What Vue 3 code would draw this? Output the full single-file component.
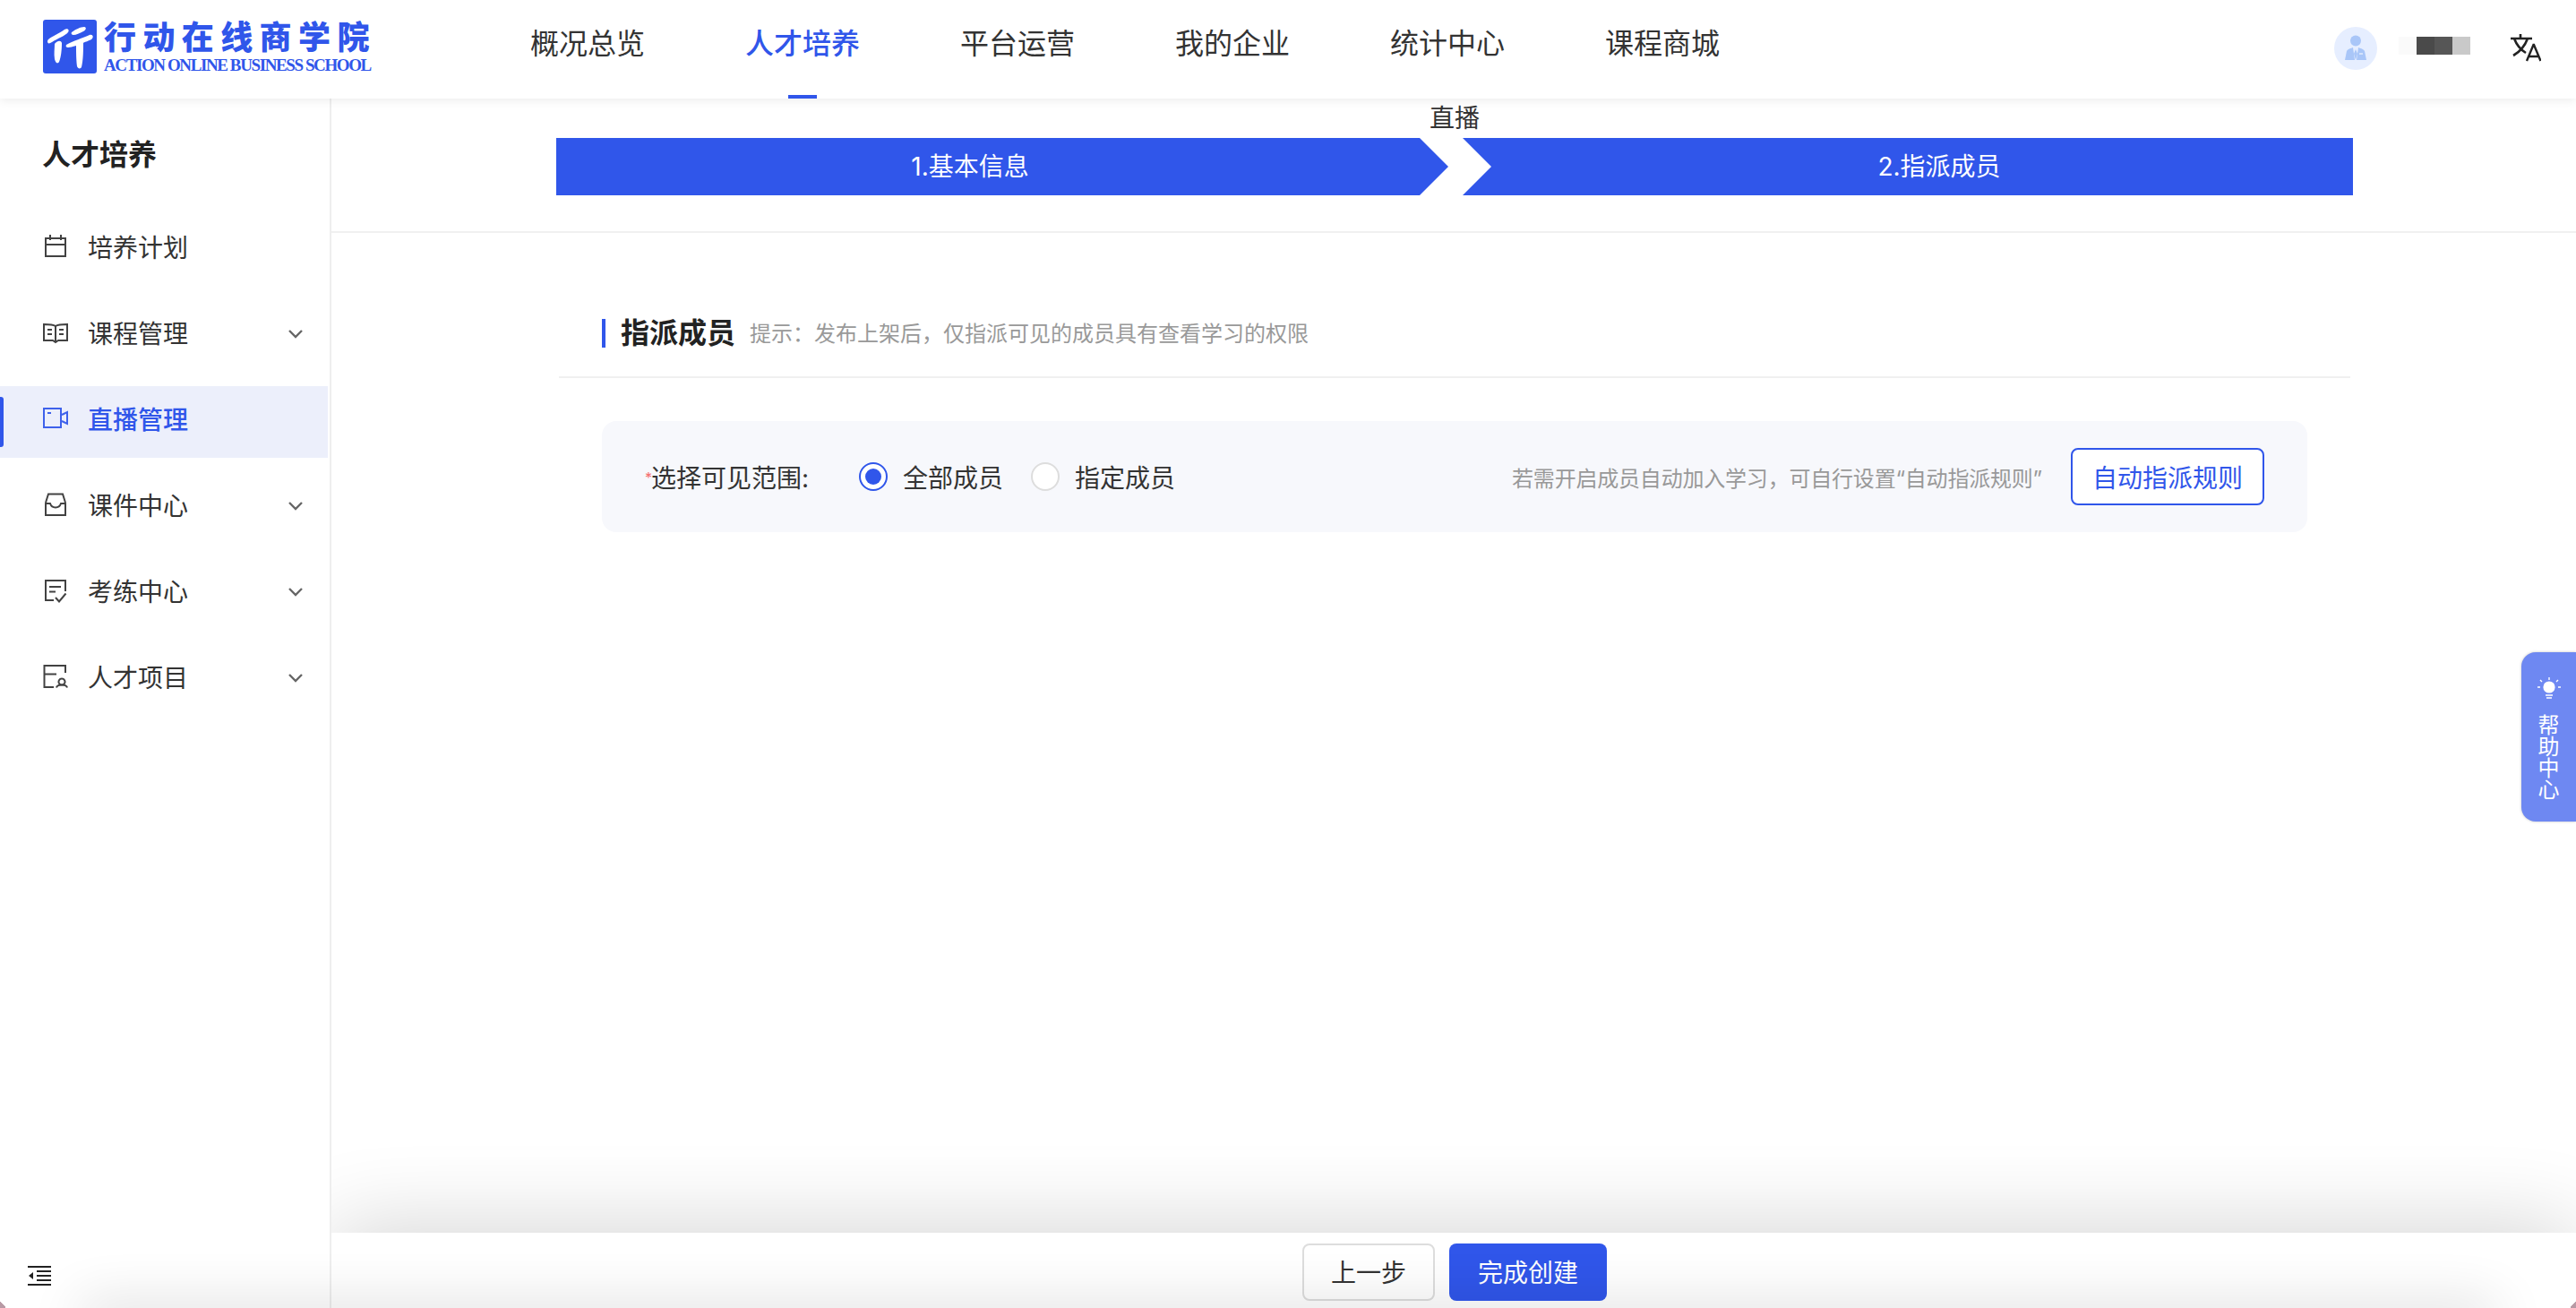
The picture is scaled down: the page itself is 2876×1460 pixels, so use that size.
<template>
  <div class="page">
    <header class="topbar">
      <div class="brand">
        <svg class="brand__mark" viewBox="0 0 60 60">
          <rect width="60" height="60" rx="3" fill="#3056ea" />
          <path d="M5 24C5 20 18 16 24 11C27 9 30 11 28 14C25 18 16 21 10 25C7 27 5 27 5 24Z" fill="#fff" />
          <path d="M13 27C15 24 20 22 21 26C21 34 20 42 18 47C16 50 14 48 13 44C12 38 13 32 13 27Z" fill="#fff" />
          <path d="M32 14C36 11 42 8 46 8C49 8 48 12 45 13C41 15 37 17 34 17C32 17 31 15 32 14Z" fill="#fff" />
          <path d="M26 28C33 24 45 20 52 17C56 16 57 20 54 22C50 24 46 25 45 26C45 34 45 45 43 53C42 55 39 55 38 52C37 44 37 34 37 29C33 30 30 31 28 31C26 31 25 30 26 28Z" fill="#fff" />
        </svg>
        <div class="brand__words">
          <div class="brand__cn">行动在线商学院</div>
          <div class="brand__en">ACTION ONLINE BUSINESS SCHOOL</div>
        </div>
      </div>
      <nav class="nav">
        <a v-for="item in navItems" :key="item" class="nav__item" :class="{ 'is-active': item === '人才培养' }">{{ item }}</a>
      </nav>
      <div class="user">
        <svg class="user__avatar" viewBox="0 0 48 48">
          <circle cx="24" cy="24" r="24" fill="#e6eeff" />
          <circle cx="24" cy="15.5" r="6" fill="#a9c6f8" />
          <path d="M12 37L14 27C16 24 19 24 21 23L23 37ZM25 37L27 23C29 24 32 24 34 27L36 37Z" fill="#a9c6f8" />
          <path d="M24 25L26 30L24 37L22 30Z" fill="#a9c6f8" />
          <path d="M28 30H32" stroke="#fff" stroke-width="1" />
        </svg>
        <div class="user__name">
          <i class="c1"></i><i class="c2"></i><i class="c3"></i><i class="c4"></i>
        </div>
        <svg class="user__lang" viewBox="0 0 34 32" fill="none" stroke="#222" stroke-width="2.6">
          <path d="M0 5H24M11 0V5M4 5C7 13 12 18 17 21M19 5C16 13 10 20 3 24" />
          <path d="M18 30L25.5 12H26L33.5 30M21 25H31" stroke-width="2.4" />
        </svg>
      </div>
    </header>

    <div class="body">
      <aside class="side">
        <h2 class="side__title">人才培养</h2>
        <ul class="menu">
          <li v-for="item in menuItems" :key="item.name" class="menu__item" :class="{ 'is-active': item.active }">
            <svg class="menu__icon" viewBox="0 0 28 28" fill="none" stroke="currentColor" stroke-width="2">
              <path v-for="d in item.icon" :key="d" :d="d" />
            </svg>
            <span class="menu__name">{{ item.name }}</span>
            <svg v-if="item.arrow" class="menu__arrow" viewBox="0 0 18 12" fill="none" stroke="#666" stroke-width="2.4">
              <path d="M2 2L9 9L16 2" />
            </svg>
          </li>
        </ul>
        <svg class="side__fold" viewBox="0 0 26 22" fill="#222">
          <path d="M0 0H26V2H0ZM0 20H26V22H0ZM10 5H26V7H10ZM10 10H26V12H10ZM10 15H26V17H10ZM1 11L6 7V15Z" />
        </svg>
      </aside>

      <main class="main">
        <div class="steps">
          <div class="steps__kind">直播</div>
          <div class="steps__bar">
            <div class="step step--first">1.基本信息</div>
            <div class="step step--last">2.指派成员</div>
          </div>
        </div>

        <section class="assign">
          <div class="assign__head">
            <h3 class="assign__title">指派成员</h3>
            <span class="assign__tip">提示：发布上架后，仅指派可见的成员具有查看学习的权限</span>
          </div>
          <div class="panel">
            <span class="panel__label"><em>*</em>选择可见范围:</span>
            <label class="radio is-checked"><i></i>全部成员</label>
            <label class="radio"><i></i>指定成员</label>
            <span class="panel__note">若需开启成员自动加入学习，可自行设置“自动指派规则”</span>
            <button type="button" class="panel__btn">自动指派规则</button>
          </div>
        </section>

        <footer class="actions">
          <button type="button" class="btn">上一步</button>
          <button type="button" class="btn btn--primary">完成创建</button>
        </footer>
      </main>
    </div>

    <div class="help">
      <svg class="help__icon" viewBox="0 0 26 26" fill="none" stroke="#fff" stroke-width="1.4">
        <circle cx="13" cy="11" r="6.6" fill="#fff" stroke="none" />
        <path d="M13 0V3M3 3L5 5M23 3L21 5M0 11H3M23 11H26M9 20H17M10 23H16" />
      </svg>
      <span>帮</span><span>助</span><span>中</span><span>心</span>
    </div>

    <div class="edge-shade"></div>
    <div class="corner corner--left"></div>
    <div class="corner corner--right"></div>
  </div>
</template>

<script setup>
const navItems = ['概况总览', '人才培养', '平台运营', '我的企业', '统计中心', '课程商城']

const menuItems = [
  { name: '培养计划', icon: ['M3 5H25V25H3Z', 'M3 12H25', 'M8 1V7M20 1V7'] },
  { name: '课程管理', arrow: true, icon: ['M14 7C11 5 6 5 1 5V23H11L14 25L17 23H27V5C22 5 17 5 14 7Z', 'M14 7V24', 'M5 11H10M5 16H10M18 11H23M18 16H23'] },
  { name: '直播管理', active: true, icon: ['M1 3H20V24H1Z', 'M21 10L27 7V20L21 17', 'M5 8H9'] },
  { name: '课件中心', arrow: true, icon: ['M3 12L6 2.5H22L25 12', 'M3 12V26H25V12', 'M3 13H8C10 19 18 19 20 13H25'] },
  { name: '考练中心', arrow: true, icon: ['M12 25H3V3H25V15', 'M7 10H20M7 15.5H14', 'M14 22L18 26.5L25.5 17.5'] },
  { name: '人才项目', arrow: true, icon: ['M12 26H1.5V2H25V10', 'M1.5 11.5H15', 'M21 16.5a3.5 3.5 0 1 0 .01 0Z', 'M15 26.5C15.5 24 18 23.5 21 23.5C24 23.5 26.5 24 27 26.5'] },
]
</script>

<style scoped>
.page {
  position: relative;
  width: 2876px;
  height: 1460px;
  overflow: hidden;
  background: #fff;
  color: #333;
  font-family: Inter, "Noto Sans CJK SC", sans-serif;
}

.topbar {
  position: relative;
  z-index: 3;
  display: flex;
  align-items: center;
  height: 110px;
  padding-left: 48px;
  background: #fff;
  box-shadow: 0 2px 10px rgba(0, 0, 0, 0.08);
}

.brand {
  display: flex;
  align-items: center;
  gap: 8px;
  width: 544px;
  margin-top: -6px;
}

.brand__mark {
  width: 60px;
  height: 60px;
}

.brand__cn {
  font-size: 36px;
  line-height: 40px;
  font-weight: 900;
  letter-spacing: 7.4px;
  color: #3056ea;
  white-space: nowrap;
}

.brand__en {
  margin-top: 1px;
  font-family: "Liberation Serif", serif;
  font-size: 19px;
  line-height: 20px;
  font-weight: 700;
  letter-spacing: -1.4px;
  color: #3056ea;
  white-space: nowrap;
}

.nav {
  display: flex;
  gap: 112px;
  height: 110px;
}

.nav__item {
  position: relative;
  font-size: 32px;
  line-height: 98px;
  color: #333;
}

.nav__item.is-active {
  font-weight: 500;
  color: #3056ea;
}

.nav__item.is-active::after {
  content: "";
  position: absolute;
  left: 48px;
  bottom: 0;
  width: 32px;
  height: 4px;
  background: #3056ea;
}

.user {
  display: flex;
  align-items: center;
  margin-left: auto;
  margin-top: -2px;
  padding-right: 39px;
}

.user__avatar {
  width: 48px;
  height: 48px;
}

.user__name {
  display: flex;
  margin-left: 24px;
  margin-top: -6px;
}

.user__name i {
  width: 20px;
  height: 20px;
}

.user__name .c1 { background: #fafafa; }
.user__name .c2 { background: #4a4a4a; }
.user__name .c3 { background: #565656; }
.user__name .c4 { background: #c9c9c9; }

.user__lang {
  width: 34px;
  height: 32px;
  margin-left: 45px;
}

.body {
  display: flex;
  height: 1350px;
}

.side {
  position: relative;
  z-index: 2;
  flex: none;
  width: 370px;
  background: #fff;
  border-right: 2px solid #eee;
  box-sizing: border-box;
}

.side__title {
  margin: 0;
  padding: 39px 0 0 47px;
  font-size: 32px;
  line-height: 48px;
  font-weight: 600;
  color: #222;
}

.menu {
  display: flex;
  flex-direction: column;
  margin: 38px 0 0;
  padding: 0;
  list-style: none;
}

.menu__item {
  position: relative;
  display: flex;
  align-items: center;
  width: 366px;
  height: 80px;
  margin-bottom: 16px;
  padding-left: 48px;
  box-sizing: border-box;
  font-size: 28px;
  color: #333;
}

.menu__item.is-active {
  margin-top: 4px;
  margin-bottom: 12px;
  padding-bottom: 8px;
  background: #eceffb;
  color: #3056ea;
  font-weight: 500;
}

.menu__item.is-active::before {
  content: "";
  position: absolute;
  left: 0;
  top: 12px;
  width: 4px;
  height: 56px;
  border-radius: 0 3px 3px 0;
  background: #3056ea;
}

.menu__icon {
  width: 28px;
  height: 28px;
  opacity: 0.92;
}

.menu__name {
  margin-left: 22px;
}

.menu__arrow {
  position: absolute;
  right: 27px;
  top: 36px;
  width: 18px;
  height: 12px;
}

.side__fold {
  position: absolute;
  left: 31px;
  top: 1303px;
  width: 26px;
  height: 22px;
}

.main {
  position: relative;
  flex: 1;
  display: flex;
  flex-direction: column;
  overflow: hidden;
}

.steps {
  flex: none;
  height: 150px;
  padding: 4px 0 0 251px;
  border-bottom: 2px solid #f0f0f0;
  box-sizing: border-box;
}

.steps__kind {
  width: 2006px;
  font-size: 28px;
  line-height: 36px;
  text-align: center;
  color: #333;
}

.steps__bar {
  display: flex;
  gap: 16px;
  width: 2006px;
  margin-top: 4px;
}

.step {
  height: 64px;
  box-sizing: border-box;
  font-size: 28px;
  line-height: 64px;
  text-align: center;
  color: #fff;
  background: #3056ea;
}

.step--first {
  width: 996px;
  padding-right: 72px;
  clip-path: polygon(0 0, 964px 0, 996px 32px, 964px 64px, 0 64px);
}

.step--last {
  width: 994px;
  padding-left: 70px;
  clip-path: polygon(0 0, 100% 0, 100% 100%, 0 100%, 32px 32px);
}

.assign {
  flex: 1;
  margin-top: 50px;
  padding-left: 254px;
}

.assign__head {
  display: flex;
  align-items: center;
  width: 2000px;
  height: 112px;
  padding: 14px 0 0 48px;
  border-bottom: 2px solid #f0f0f0;
  box-sizing: border-box;
}

.assign__title {
  margin: 0;
  padding-left: 17px;
  border-left: 4px solid #3056ea;
  font-size: 32px;
  line-height: 32px;
  font-weight: 600;
  color: #222;
}

.assign__tip {
  margin: 0 0 4px 16px;
  font-size: 24px;
  color: #999;
}

.panel {
  display: flex;
  align-items: center;
  width: 1904px;
  height: 124px;
  margin: 48px 0 0 48px;
  padding: 0 48px;
  box-sizing: border-box;
  border-radius: 16px;
  background: #f7f8fc;
  font-size: 28px;
  color: #333;
}

.panel__label {
  position: relative;
  padding-left: 7px;
  margin-right: 56px;
}

.panel__label em {
  position: absolute;
  left: 0;
  top: 11px;
  font-size: 16px;
  font-style: normal;
  color: #f56c6c;
}

.radio {
  display: flex;
  align-items: center;
  gap: 17px;
  margin-right: 31px;
}

.radio i {
  position: relative;
  width: 32px;
  height: 32px;
  border: 2px solid #ddd;
  border-radius: 50%;
  background: #fff;
  box-sizing: border-box;
}

.radio.is-checked i {
  border-color: #3056ea;
}

.radio.is-checked i::after {
  content: "";
  position: absolute;
  inset: 5px;
  border-radius: 50%;
  background: #3056ea;
}

.panel__note {
  margin-left: auto;
  font-size: 24px;
  letter-spacing: -0.2px;
  color: #999;
}

.panel__btn {
  width: 216px;
  height: 64px;
  margin-left: 32px;
  padding: 0;
  border: 2px solid #3056ea;
  border-radius: 8px;
  background: #fff;
  font: inherit;
  color: #3056ea;
}

.actions {
  display: flex;
  flex: none;
  justify-content: center;
  gap: 16px;
  height: 84px;
  padding: 12px 0 0 2px;
  box-sizing: border-box;
  background: #fff;
  box-shadow: 0 0 100px rgba(0, 0, 0, 0.2);
}

.btn {
  width: 148px;
  height: 64px;
  padding: 0 0 2px;
  border: 2px solid #ddd;
  border-radius: 8px;
  background: #fff;
  font: inherit;
  font-size: 28px;
  color: #333;
}

.btn--primary {
  width: 176px;
  border: none;
  background: #3056ea;
  color: #fff;
}

.help {
  position: absolute;
  z-index: 4;
  top: 728px;
  right: 0;
  display: flex;
  flex-direction: column;
  align-items: center;
  width: 61px;
  height: 189px;
  padding-top: 28px;
  box-sizing: border-box;
  border-radius: 16px 0 0 16px;
  background: #6e88f2;
  box-shadow: 0 0 3px rgba(0, 0, 0, 0.25);
  font-size: 24px;
  line-height: 24px;
  color: #fff;
}

.help__icon {
  width: 26px;
  height: 26px;
  margin-bottom: 16px;
}

.edge-shade {
  position: absolute;
  z-index: 5;
  left: 90px;
  right: 90px;
  bottom: -20px;
  height: 20px;
  box-shadow: 0 0 60px rgba(0, 0, 0, 0.24);
  pointer-events: none;
}

.corner {
  position: absolute;
  z-index: 6;
  bottom: 0;
  width: 6px;
  height: 8px;
}

.corner--left {
  left: 0;
  background: linear-gradient(45deg, #b89aa5 50%, transparent 50%);
}

.corner--right {
  right: 0;
  background: linear-gradient(-45deg, #b89aa5 50%, transparent 50%);
}
</style>

<style>
html, body {
  margin: 0;
  background: #fff;
}
</style>
